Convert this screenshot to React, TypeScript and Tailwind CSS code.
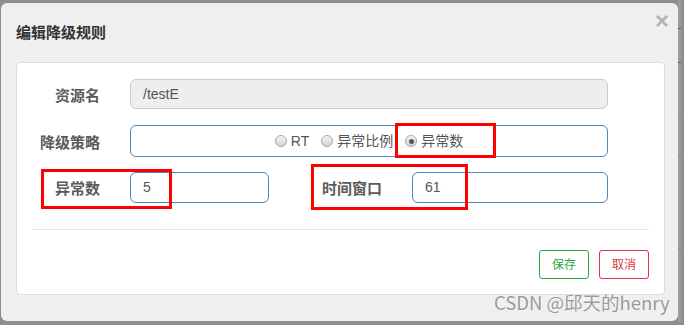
import type { ReactNode } from "react";

const font = { fontFamily: '"Liberation Sans", "Noto Sans CJK SC", sans-serif' };

function Radio({ checked, children }: { checked?: boolean; children: ReactNode }) {
  return (
    <label className="flex items-center">
      <span className="flex h-[12px] w-[12px] items-center justify-center rounded-full border border-[#a8a8a8] bg-gradient-to-b from-[#f4f4f4] to-[#d4d4d4]">
        {checked && <span className="h-[5px] w-[5px] rounded-full bg-[#555]" />}
      </span>
      <span className="ml-[4px] text-[14px] text-[#555]">{children}</span>
    </label>
  );
}

function Label({ w, children }: { w: string; children: ReactNode }) {
  return (
    <div className={`${w} shrink-0 pt-[4px] text-right text-[15px] font-bold text-[#5a5a5a]`}>
      {children}
    </div>
  );
}

export default function App() {
  return (
    <div
      className="relative flex h-[325px] w-[684px] overflow-hidden bg-[#8e8e8e] pt-[3px] pl-[1px]"
      style={font}
    >
      {/* modal */}
      <div className="flex h-[318px] w-[677px] shrink-0 flex-col rounded-[6px] bg-[#efefef]">
        <div className="relative flex h-[59px] shrink-0 items-center px-[15px] pt-[1px]">
          <h4 className="text-[15px] font-bold text-[#333]">编辑降级规则</h4>
          <span className="absolute right-[9px] top-[3px] text-[24px] font-bold leading-[30px] text-[#b4b4b4]">
            ×
          </span>
        </div>

        <div className="ml-[15px] mr-[13px] flex flex-col rounded-[4px] border border-[#dddddd] bg-white pt-[16px] pb-[15px]">
          {/* row 1 */}
          <div className="flex items-center">
            <Label w="w-[83px]">资源名</Label>
            <div className="ml-[30px] flex h-[30px] w-[478px] items-center rounded-[6px] border border-[#cccccc] bg-[#eeeeee] px-[12px] text-[14px] text-[#555]">
              /testE
            </div>
          </div>

          {/* row 2 */}
          <div className="mt-[16px] flex items-center">
            <Label w="w-[83px]">降级策略</Label>
            <div className="ml-[30px] flex h-[32px] w-[478px] items-center justify-center gap-[12px] rounded-[6px] border border-[#4a86c2]">
              <Radio>RT</Radio>
              <Radio>异常比例</Radio>
              <Radio checked>异常数</Radio>
            </div>
          </div>

          {/* row 3 */}
          <div className="mt-[15px] flex items-center">
            <Label w="w-[83px]">异常数</Label>
            <div className="ml-[30px] flex h-[31px] w-[139px] items-center rounded-[6px] border border-[#4a86c2] px-[12px] text-[14px] text-[#555]">
              5
            </div>
            <Label w="w-[113px]">时间窗口</Label>
            <div className="ml-[30px] flex h-[31px] w-[196px] items-center rounded-[6px] border border-[#4a86c2] px-[12px] text-[14px] text-[#555]">
              61
            </div>
          </div>

          <div className="mx-[15px] mt-[26px] h-px bg-[#e5e5e5]" />

          <div className="mr-[15px] mt-[20px] flex justify-end gap-[10px]">
            <button className="flex h-[29px] w-[50px] items-center justify-center rounded-[3px] border border-[#28a745] text-[12px] text-[#28a745]">
              保存
            </button>
            <button className="flex h-[29px] w-[50px] items-center justify-center rounded-[3px] border border-[#dc3545] text-[12px] text-[#dc3545]">
              取消
            </button>
          </div>
        </div>
      </div>

      {/* page behind the overlay, peeking out on the right */}
      <div className="flex h-full w-[3px] shrink-0 flex-col bg-[#9c9c9c] -mt-[3px]">
        <div className="mt-[28px] h-px bg-[#3f6d9a]" />
        <div className="mt-[33px] h-px bg-[#3f6d9a]" />
        <div className="mt-[50px] h-px bg-[#8a8a8a]" />
        <div className="mt-[41px] h-px bg-[#8a8a8a]" />
        <div className="mt-[92px] h-px bg-[#8a8a8a]" />
      </div>

      {/* annotation boxes */}
      <div className="absolute left-[395px] top-[123px] h-[35px] w-[101px] border-[3px] border-[#ff0000]" />
      <div className="absolute left-[41px] top-[169px] h-[40px] w-[131px] border-[3px] border-[#ff0000]" />
      <div className="absolute left-[311px] top-[164px] h-[46px] w-[157px] border-[3px] border-[#ff0000]" />

      {/* watermark */}
      <div
        className="absolute left-[494px] top-[287px] text-[18.5px] leading-[30px] text-[#9a9a9a] [text-shadow:0_0_2px_#ffffff]"
        style={{ fontFamily: '"Noto Sans CJK SC", "Noto Sans", sans-serif' }}
      >
        CSDN @邱天的henry
      </div>
    </div>
  );
}
